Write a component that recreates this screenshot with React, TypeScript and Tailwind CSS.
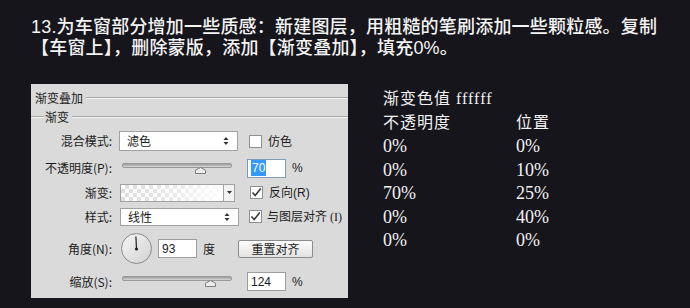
import React from 'react'

const cjk = { fontFamily: '"Noto Sans CJK SC", "Liberation Sans", sans-serif' }

const Groove = ({ className = '' }: { className?: string }) => (
  <div className={`h-[2px] border-t border-[#a6a6a6] border-b border-b-[#f4f4f4] ${className}`} />
)

const Label = ({ text }: { text: string }) => (
  <div className="w-[82px] shrink-0 text-right pr-[1px]">{text}</div>
)

const Checkbox = ({ checked }: { checked?: boolean }) => (
  <div className="w-[13px] h-[13px] shrink-0 bg-white border border-[#8e8f8f] flex items-center justify-center">
    {checked && (
      <svg width="11" height="11" viewBox="0 0 11 11">
        <path d="M1.5 5.5 L4.2 8.6 L9.8 1.6" fill="none" stroke="#3a3a3a" strokeWidth="1.6" />
      </svg>
    )}
  </div>
)

const UpDown = () => (
  <svg width="6" height="10" viewBox="0 0 6 10" className="shrink-0">
    <path d="M3 1 L5.5 4 L0.5 4 Z" fill="#333" />
    <path d="M3 9 L5.5 6 L0.5 6 Z" fill="#333" />
  </svg>
)

const Select = ({ value, h }: { value: string; h: string }) => (
  <div className={`w-[119px] ${h} bg-white border border-[#a2a2a2] flex items-center justify-between pl-[7px] pr-[8px]`}>
    <span>{value}</span>
    <UpDown />
  </div>
)

const Slider = ({ thumb }: { thumb: number }) => (
  <div className="relative w-[110px] h-[11px] ml-[3px]">
    <div className="h-[5px] rounded-[2px] bg-gradient-to-b from-[#9c9c9c] to-[#d8d8d8] border border-[#9a9a9a]" />
    <svg width="11" height="7" viewBox="0 0 11 7" className="absolute top-[4px]" style={{ left: thumb }}>
      <path d="M0.5 6.5 L0.5 3.2 L5.5 0.5 L10.5 3.2 L10.5 6.5 Z" fill="#ececec" stroke="#7d7d7d" />
    </svg>
  </div>
)

const NumBox = ({ children, focus }: { children: React.ReactNode; focus?: boolean }) => (
  <div
    className={`w-[39px] h-[19px] bg-white border ${focus ? 'border-[#7f9db9]' : 'border-[#9d9d9d]'} flex items-center pl-[3px] text-[12px] leading-none`}
    style={{ fontFamily: '"Liberation Sans", sans-serif' }}
  >
    {children}
  </div>
)

function Panel() {
  return (
    <div className="ml-[31px] w-[317px] h-[214px] shrink-0 bg-[#dadada] text-[12px] text-[#1c1c1c] leading-none" style={cjk}>
      <div className="flex items-center pt-[6px] h-[22px] pl-[4px]">
        <span>渐变叠加</span>
        <Groove className="flex-1 ml-[3px]" />
      </div>
      <div className="flex items-center mt-[3px] h-[16px]">
        <Groove className="w-[13px]" />
        <span className="ml-[1px]">渐变</span>
        <Groove className="flex-1 ml-[3px]" />
      </div>

      <div className="mt-[4px] flex items-center h-[24px]">
        <Label text="混合模式:" />
        <div className="ml-[6px]">
          <Select value="滤色" h="h-[20px]" />
        </div>
        <div className="ml-[11px] flex items-center">
          <Checkbox />
          <span className="ml-[6px]">仿色</span>
        </div>
      </div>

      <div className="flex items-center h-[30px]">
        <Label text="不透明度(P):" />
        <div className="ml-[6px] w-[120px]">
          <Slider thumb={73} />
        </div>
        <div className="ml-[8px] flex items-center">
          <NumBox focus>
            <span className="bg-[#3399ff] text-white px-[1px] py-[2px]">70</span>
          </NumBox>
          <span className="ml-[6px]" style={{ fontFamily: '"Liberation Sans", sans-serif' }}>%</span>
        </div>
      </div>

      <div className="flex items-center h-[19px]">
        <Label text="渐变:" />
        <div className="ml-[7px] flex w-[119px]">
          <div className="relative w-[104px] h-[18px] border border-[#a2a2a2] bg-white bg-[conic-gradient(#d9d9d9_25%,#ffffff_0_50%,#d9d9d9_0_75%,#ffffff_0)] bg-[length:8px_8px]">
            <div className="absolute inset-0 bg-gradient-to-r from-white/10 via-white/40 to-white/95" />
          </div>
          <div className="w-[11px] h-[18px] border border-l-0 border-[#a2a2a2] bg-[#f3f3f3] flex items-center justify-center">
            <svg width="5" height="3" viewBox="0 0 5 3">
              <path d="M0 0 L5 0 L2.5 3 Z" fill="#333" />
            </svg>
          </div>
        </div>
        <div className="ml-[11px] flex items-center">
          <Checkbox checked />
          <span className="ml-[6px]">
            反向<span style={{ fontFamily: '"Liberation Sans", sans-serif' }}>(R)</span>
          </span>
        </div>
      </div>

      <div className="flex items-center h-[29px]">
        <Label text="样式:" />
        <div className="ml-[7px]">
          <Select value="线性" h="h-[18px]" />
        </div>
        <div className="ml-[10px] flex items-center">
          <Checkbox checked />
          <span className="ml-[5px]">
            与图层对齐<span style={{ fontFamily: '"Liberation Serif", serif' }}> (I)</span>
          </span>
        </div>
      </div>

      <div className="flex items-center h-[35px]">
        <Label text="角度(N):" />
        <div className="ml-[8px] w-[31px] h-[31px] rounded-full border border-[#8a8a8a] bg-gradient-to-br from-[#f6f6f6] to-[#d2d2d2] relative">
          <svg width="29" height="29" viewBox="0 0 29 29" className="absolute inset-0">
            <line x1="14.5" y1="15" x2="13.9" y2="2.5" stroke="#222" strokeWidth="1.2" />
            <circle cx="14.5" cy="15" r="1.6" fill="#222" />
          </svg>
        </div>
        <div className="ml-[6px]">
          <NumBox>93</NumBox>
        </div>
        <span className="ml-[6px]">度</span>
        <div className="ml-[23px] w-[75px] h-[18px] rounded-[2px] border border-[#8c8c8c] bg-gradient-to-b from-[#fdfdfd] to-[#e2e2e2] flex items-center justify-center">
          重置对齐
        </div>
      </div>

      <div className="flex items-center h-[31px]">
        <Label text="缩放(S):" />
        <div className="ml-[6px] w-[120px]">
          <Slider thumb={83} />
        </div>
        <div className="ml-[8px] flex items-center">
          <NumBox>124</NumBox>
          <span className="ml-[6px]" style={{ fontFamily: '"Liberation Sans", sans-serif' }}>%</span>
        </div>
      </div>
    </div>
  )
}

const rows = [
  ['0%', '0%'],
  ['0%', '10%'],
  ['70%', '25%'],
  ['0%', '40%'],
  ['0%', '0%'],
]

export default function App() {
  return (
    <div className="w-[690px] h-[308px] bg-[#16151b] overflow-hidden text-white">
      <div
        className="pl-[31px] pt-[17px] text-[18px] leading-[21px] tracking-[0.2px] font-medium text-[#f4f4f4]"
        style={{ fontFamily: '"Liberation Sans", "Noto Sans CJK SC", sans-serif' }}
      >
        <div>13.为车窗部分增加一些质感：新建图层，用粗糙的笔刷添加一些颗粒感。复制</div>
        <div>【车窗上】，删除蒙版，添加【渐变叠加】，填充0%。</div>
      </div>

      <div className="flex mt-[25px]">
        <Panel />
        <div
          className="ml-[35px] pt-[3px] text-[#f2f2f2]"
          style={{ fontFamily: '"Liberation Serif", "Noto Sans CJK SC", serif' }}
        >
          <div className="text-[16px] leading-[24px] tracking-[1px]">渐变色值 ffffff</div>
          <div className="flex text-[16px] leading-[24px] tracking-[1px]">
            <div className="w-[133px]">不透明度</div>
            <div>位置</div>
          </div>
          {rows.map((r, i) => (
            <div key={i} className="flex text-[18px] leading-[23.5px]">
              <div className="w-[133px]">{r[0]}</div>
              <div>{r[1]}</div>
            </div>
          ))}
        </div>
      </div>
    </div>
  )
}
